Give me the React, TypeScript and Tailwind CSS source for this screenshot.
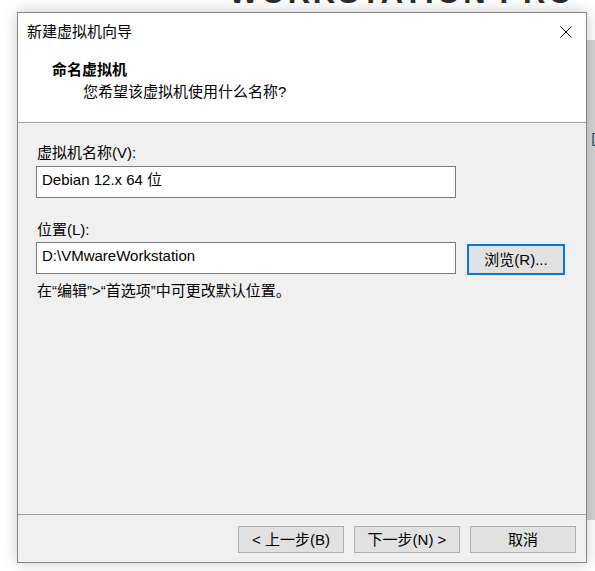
import React from 'react';

const uiFont = { fontFamily: '"Liberation Sans", "Noto Sans CJK SC", sans-serif' };

function CloseIcon() {
    return (
        <svg width="12" height="12" viewBox="0 0 12 12" className="block">
            <path d="M0.5 0.5 L11.5 11.5 M11.5 0.5 L0.5 11.5" stroke="#000" strokeWidth="1" fill="none" />
        </svg>
    );
}

function FooterButton({ children }: { children: React.ReactNode }) {
    return (
        <button className="w-[106px] h-[27px] border border-[#adadad] bg-[#e1e1e1] text-[15px] leading-none text-black flex items-center justify-center">
            {children}
        </button>
    );
}

export default function App() {
    return (
        <div className="relative w-[595px] h-[571px] bg-white overflow-hidden text-black" style={uiFont}>
            {/* window behind the dialog, right edge */}
            <div className="absolute left-[587px] top-[40px] w-[20px] h-[480px] bg-[#d6d6d6]">
                <div className="mt-[92px] ml-[4px] text-[15px] leading-none text-[#1e3a6e]">匡</div>
            </div>

            {/* product banner, mostly hidden behind the dialog */}
            <div className="h-[12px] overflow-hidden pl-[229px]">
                <div
                    className="mt-[-23px] text-[31px] font-bold leading-none tracking-[2.7px] text-[#2b2b2b] whitespace-nowrap"
                    style={{ fontFamily: '"Liberation Sans", Arial, sans-serif' }}
                >
                    WORKSTATION PRO
                </div>
            </div>

            <div className="relative ml-[17px] w-[570px] h-[551px] border border-[#858585] bg-[#f0f0f0] flex flex-col shadow-[0_0_14px_rgba(0,0,0,0.22)]">
                {/* header */}
                <div className="h-[109px] bg-white flex flex-col">
                    <div className="h-[38px] flex items-center justify-between pl-[9px] pr-[14px]">
                        <span className="text-[15px] leading-5">新建虚拟机向导</span>
                        <CloseIcon />
                    </div>
                    <div className="mt-[9px] pl-[34px] text-[15px] leading-5 font-bold">命名虚拟机</div>
                    <div className="mt-[2px] pl-[65px] text-[15px] leading-5">您希望该虚拟机使用什么名称?</div>
                </div>
                <div className="h-px bg-[#a0a0a0]" />

                {/* body */}
                <div className="flex-1 pt-[20px] pl-[18px] flex flex-col">
                    <div className="pl-px text-[15px] leading-5">虚拟机名称(V):</div>
                    <div className="mt-[3px] w-[420px] h-[32px] border border-[#7a7a7a] bg-white flex items-center pl-[5px] pb-[3px] text-[15px]">
                        Debian 12.x 64 位
                    </div>

                    <div className="mt-[22px] pl-px text-[15px] leading-5">位置(L):</div>
                    <div className="mt-[2px] flex items-start gap-[11px]">
                        <div className="w-[420px] h-[32px] border border-[#7a7a7a] bg-white flex items-center pl-[5px] pb-[3px] text-[15px]">
                            D:\VMwareWorkstation
                        </div>
                        <button className="mt-[2px] w-[98px] h-[31px] border-2 border-[#0078d7] bg-[#e1e1e1] text-[15px] leading-none flex items-center justify-center">
                            浏览(R)...
                        </button>
                    </div>
                    <div className="mt-[6px] pl-px text-[15px] leading-5">在“编辑”&gt;“首选项”中可更改默认位置。</div>
                </div>

                {/* footer */}
                <div className="h-px bg-[#a0a0a0]" />
                <div className="h-[47px] pt-[11px] pr-[10px] flex justify-end items-start gap-[10px]">
                    <FooterButton>&lt; 上一步(B)</FooterButton>
                    <FooterButton>下一步(N) &gt;</FooterButton>
                    <FooterButton>取消</FooterButton>
                </div>
            </div>
        </div>
    );
}
